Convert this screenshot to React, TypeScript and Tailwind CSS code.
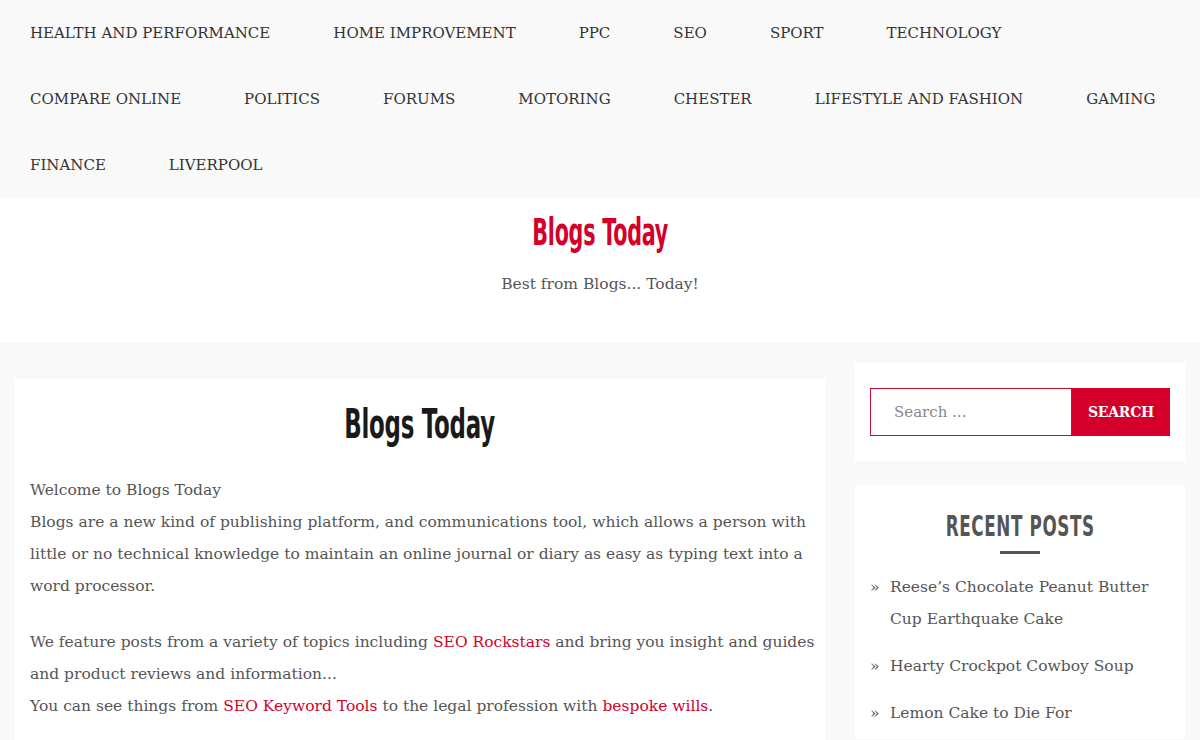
import React from 'react';

const serif = { fontFamily: '"DejaVu Serif", "Liberation Serif", serif' };
const narrow = { fontFamily: '"DejaVu Sans", "Liberation Sans", sans-serif' };

const navRows: string[][] = [
  ['HEALTH AND PERFORMANCE', 'HOME IMPROVEMENT', 'PPC', 'SEO', 'SPORT', 'TECHNOLOGY'],
  ['COMPARE ONLINE', 'POLITICS', 'FORUMS', 'MOTORING', 'CHESTER', 'LIFESTYLE AND FASHION', 'GAMING'],
  ['FINANCE', 'LIVERPOOL'],
];

const recentPosts = [
  ['Reese’s Chocolate Peanut Butter', 'Cup Earthquake Cake'],
  ['Hearty Crockpot Cowboy Soup'],
  ['Lemon Cake to Die For'],
];

const Link: React.FC<{ children: React.ReactNode }> = ({ children }) => (
  <a href="#" className="text-[#d4002a]">{children}</a>
);

// condensed heading face stand-in
const Condensed: React.FC<{ children: React.ReactNode; className?: string }> = ({ children, className }) => (
  <span className={`inline-block origin-center whitespace-nowrap ${className ?? ''}`} style={narrow}>{children}</span>
);

const Line: React.FC<{ children: React.ReactNode }> = ({ children }) => (
  <span className="block whitespace-nowrap">{children}</span>
);

export default function App() {
  return (
    <div className="min-h-screen bg-[#f9f9f9] text-[16px]" style={serif}>
      {/* Top navigation */}
      <nav className="bg-[#f9f9f9]">
        {navRows.map((row, i) => (
          <ul key={i} className="flex h-[66px] items-center gap-[63px] pl-[30px] text-[15px] text-[#333]">
            {row.map((item) => (
              <li key={item} className="whitespace-nowrap">{item}</li>
            ))}
          </ul>
        ))}
      </nav>

      {/* Site branding */}
      <header className="flex h-[145px] flex-col items-center bg-white pt-[12px]">
        <h1 className="text-[37px] font-bold leading-[44px] tracking-[-0.5px] text-[#d4002a]">
          <Condensed className="scale-x-[0.56]">Blogs Today</Condensed>
        </h1>
        <p className="mt-[18px] text-[15.5px] text-[#555]">Best from Blogs... Today!</p>
      </header>

      {/* Content */}
      <div className="flex gap-[30px] px-[15px] pt-[20px]">
        <main className="mt-[16px] w-[810px] bg-white px-[15px] pt-[20px] pb-[20px]">
          <h2 className="text-center text-[41px] font-bold leading-[50px] tracking-[-0.5px] text-[#1a1a1a]">
            <Condensed className="scale-x-[0.56]">Blogs Today</Condensed>
          </h2>
          <div className="mt-[25px] text-[15.5px] leading-[32px] text-[#555]">
            <p>
              <Line>Welcome to Blogs Today</Line>
              <Line>Blogs are a new kind of publishing platform, and communications tool, which allows a person with</Line>
              <Line>little or no technical knowledge to maintain an online journal or diary as easy as typing text into a</Line>
              <Line>word processor.</Line>
            </p>
            <p className="mt-[24px]">
              <Line>We feature posts from a variety of topics including <Link>SEO Rockstars</Link> and bring you insight and guides</Line>
              <Line>and product reviews and information...</Line>
              <Line>You can see things from <Link>SEO Keyword Tools</Link> to the legal profession with <Link>bespoke wills</Link>.</Line>
            </p>
          </div>
        </main>

        <aside className="flex w-[330px] flex-col gap-[24px]">
          <section className="bg-white px-[15px] py-[25px]">
            <form className="flex h-[48px]" onSubmit={(e) => e.preventDefault()}>
              <input
                type="search"
                placeholder="Search ..."
                className="w-[202px] border border-[#c8102e] bg-white px-[23px] text-[15px] text-[#555] placeholder:text-[#888] outline-none"
                style={serif}
              />
              <button type="submit" className="flex-1 bg-[#d4002a] text-[14px] font-bold tracking-[-0.3px] text-white" style={serif}>
                SEARCH
              </button>
            </form>
          </section>

          <section className="bg-white px-[15px] pt-[24px] pb-[10px]">
            <h3 className="text-center text-[28px] font-bold leading-[36px] tracking-[1px] text-[#555]">
              <Condensed className="scale-x-[0.6]">RECENT POSTS</Condensed>
            </h3>
            <div className="mx-auto mt-[6px] h-[3px] w-[40px] bg-[#555]" />
            <ul className="mt-[17px] flex flex-col gap-[15px] text-[15.5px] leading-[32px] text-[#555]">
              {recentPosts.map((lines) => (
                <li key={lines[0]} className="flex">
                  <span className="w-[20px] shrink-0">»</span>
                  <span>
                    {lines.map((l) => (
                      <Line key={l}>{l}</Line>
                    ))}
                  </span>
                </li>
              ))}
            </ul>
          </section>
        </aside>
      </div>
    </div>
  );
}
